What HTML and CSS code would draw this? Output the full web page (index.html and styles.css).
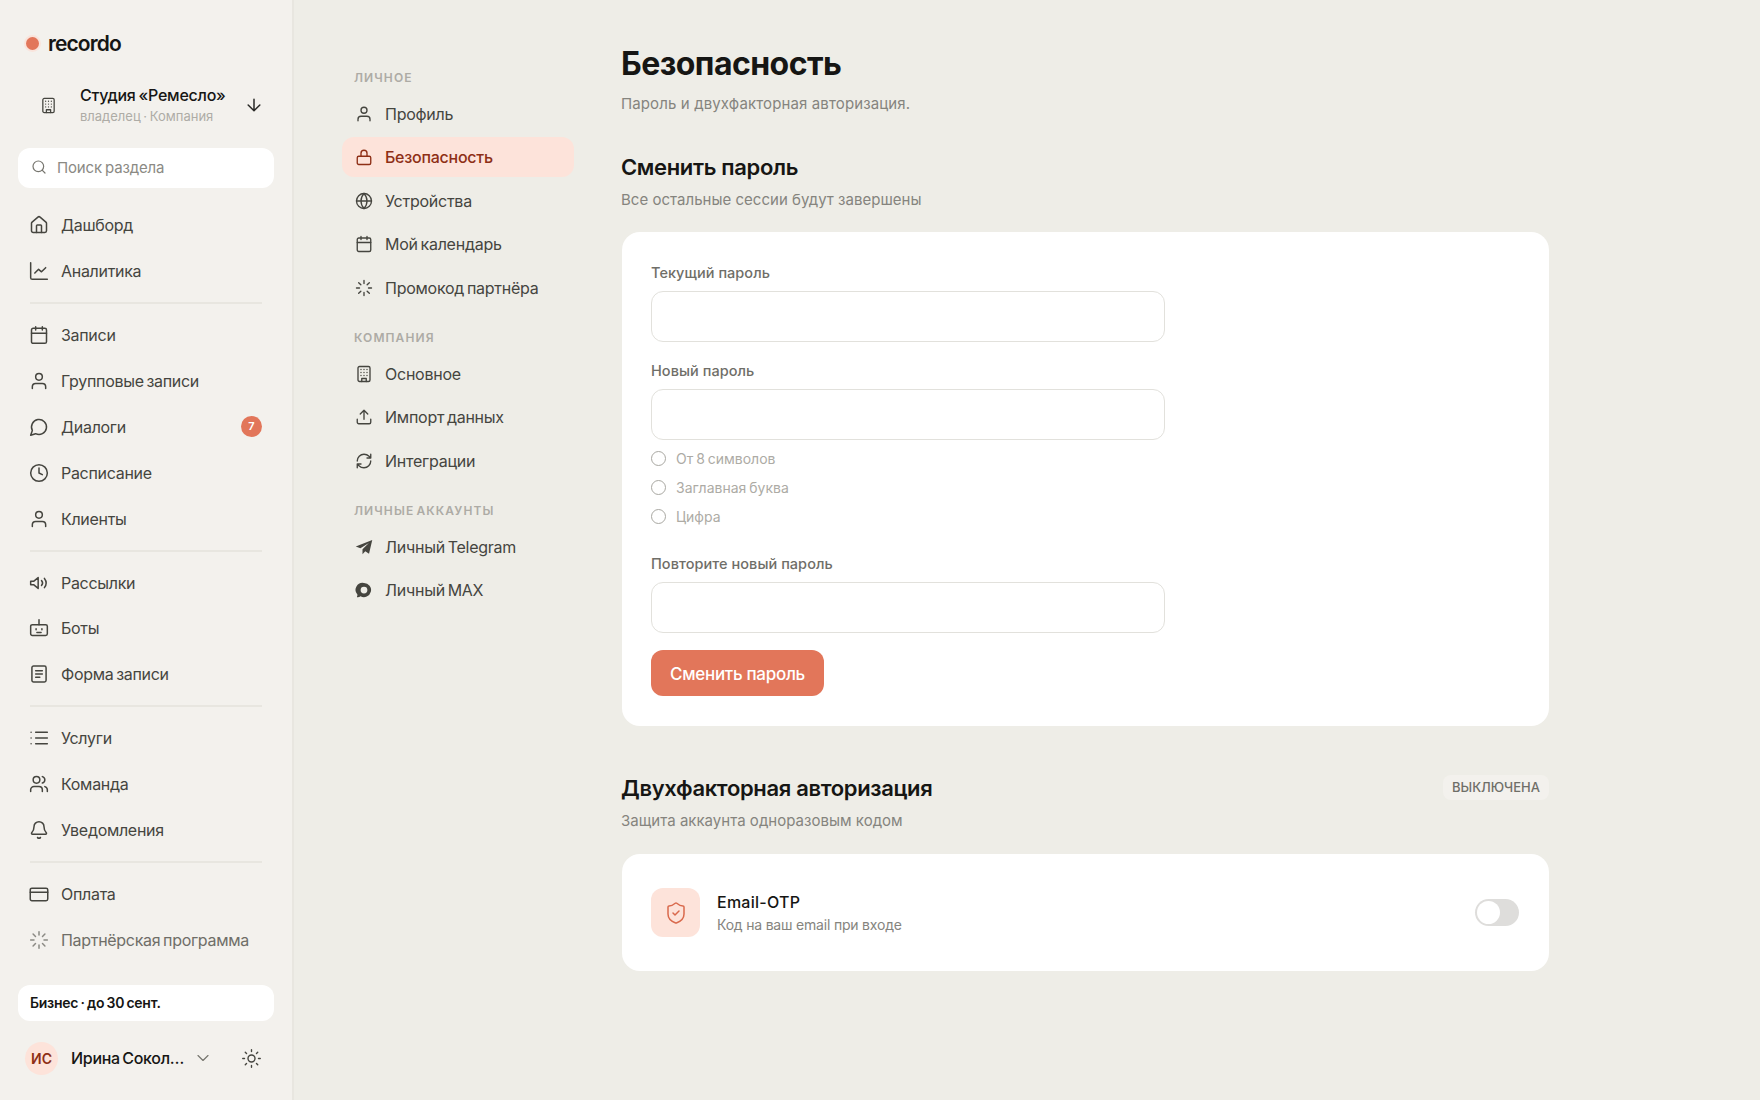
FILE: index.html
```html
<!DOCTYPE html>
<html lang="ru">
<head>
    <meta charset="UTF-8">
    <title>Безопасность — recordo</title>
    <link rel="stylesheet" href="styles.css">
</head>
<body>
    <svg class="sprite" xmlns="http://www.w3.org/2000/svg">
        <symbol id="i-building" viewBox="0 0 24 24"><rect x="4" y="2" width="16" height="20" rx="2"/><path d="M9 22v-4h6v4M8 6h.01M12 6h.01M16 6h.01M8 10h.01M12 10h.01M16 10h.01M8 14h.01M12 14h.01M16 14h.01"/></symbol>
        <symbol id="i-house" viewBox="0 0 24 24"><path d="M15 21v-8a1 1 0 0 0-1-1h-4a1 1 0 0 0-1 1v8"/><path d="M3 10a2 2 0 0 1 .709-1.528l7-5.999a2 2 0 0 1 2.582 0l7 5.999A2 2 0 0 1 21 10v9a2 2 0 0 1-2 2H5a2 2 0 0 1-2-2z"/></symbol>
        <symbol id="i-chart" viewBox="0 0 24 24"><path d="M2 2v18a2 2 0 0 0 2 2h18"/><path d="m20 8-5 5-3.500-3L7 14.500"/></symbol>
        <symbol id="i-calendar" viewBox="0 0 24 24"><path d="M8 2v4M16 2v4"/><rect x="3" y="4" width="18" height="18" rx="2"/><path d="M3 10h18"/></symbol>
        <symbol id="i-user" viewBox="0 0 24 24"><path d="M20 21v-2a4 4 0 0 0-4-4H8a4 4 0 0 0-4 4v2"/><circle cx="12" cy="7" r="4"/></symbol>
        <symbol id="i-message" viewBox="0 0 24 24"><path d="M7.900 20A9 9 0 1 0 4 16.100L2 22Z"/></symbol>
        <symbol id="i-clock" viewBox="0 0 24 24"><circle cx="12" cy="12" r="10"/><path d="M12 6v6l4 2"/></symbol>
        <symbol id="i-speaker" viewBox="0 0 24 24"><path d="M11 5.500 5.500 10H2v4h3.500l5.500 4.500z"/><path d="M15 9a4.500 4.500 0 0 1 0 6M18.500 6.500a9 9 0 0 1 0 11"/></symbol>
        <symbol id="i-bot" viewBox="0 0 24 24"><path d="M12 8V2"/><rect x="2" y="8" width="20" height="13" rx="2"/><path d="M8.500 13v1M15.500 13v1M9.500 17.500h5"/></symbol>
        <symbol id="i-form" viewBox="0 0 24 24"><rect x="3.500" y="2.500" width="17" height="19" rx="2"/><path d="M8 8h8M8 12h8M8 16h5"/></symbol>
        <symbol id="i-list" viewBox="0 0 24 24"><path d="M2.500 5h.01M2.500 12h.01M2.500 19h.01M8 5h14M8 12h14M8 19h14"/></symbol>
        <symbol id="i-users" viewBox="0 0 24 24"><path d="M16 21v-2a4 4 0 0 0-4-4H6a4 4 0 0 0-4 4v2"/><circle cx="9" cy="7" r="4"/><path d="M22 21v-2a4 4 0 0 0-3-3.870M16 3.130a4 4 0 0 1 0 7.750"/></symbol>
        <symbol id="i-bell" viewBox="0 0 24 24"><path d="M10.268 21a2 2 0 0 0 3.464 0"/><path d="M3.262 15.326A1 1 0 0 0 4 17h16a1 1 0 0 0 .740-1.673C19.410 13.956 18 12.499 18 8A6 6 0 0 0 6 8c0 4.499-1.411 5.956-2.738 7.326"/></symbol>
        <symbol id="i-card" viewBox="0 0 24 24"><rect x="1.500" y="5" width="21" height="15" rx="2"/><path d="M1.500 10h21"/></symbol>
        <symbol id="i-loader" viewBox="0 0 24 24"><path d="M12 2v4M16.200 7.800l2.900-2.900M18 12h4M16.200 16.200l2.900 2.900M12 18v4M4.900 19.100l2.900-2.900M2 12h4M4.900 4.900l2.900 2.900"/></symbol>
        <symbol id="i-lock" viewBox="0 0 24 24"><rect x="3" y="11" width="18" height="11" rx="2"/><path d="M8 11V7a4 4 0 0 1 8 0v4"/></symbol>
        <symbol id="i-globe" viewBox="0 0 24 24"><circle cx="12" cy="12" r="10"/><path d="M12 2a14.500 14.500 0 0 0 0 20 14.500 14.500 0 0 0 0-20M2 12h20"/></symbol>
        <symbol id="i-upload" viewBox="0 0 24 24"><path d="M21 15v4a2 2 0 0 1-2 2H5a2 2 0 0 1-2-2v-4M17 8l-5-5-5 5M12 3v12"/></symbol>
        <symbol id="i-refresh" viewBox="0 0 24 24"><path d="M3 12a9 9 0 0 1 9-9 9.750 9.750 0 0 1 6.740 2.740L21 8M21 3v5h-5M21 12a9 9 0 0 1-9 9 9.750 9.750 0 0 1-6.740-2.740L3 16M8 16H3v5"/></symbol>
    </svg>

    <aside class="sidebar">
        <div class="logo"><span class="logo-dot"></span>recordo</div>

        <div class="company">
            <svg class="icon company-icon"><use href="#i-building"/></svg>
            <div class="company-text">
                <div class="company-name">Студия «Ремесло»</div>
                <div class="company-role">владелец · Компания</div>
            </div>
            <svg class="icon company-arrow" viewBox="0 0 24 24"><path d="M12 5v14M19 12l-7 7-7-7"/></svg>
        </div>

        <div class="search">
            <svg class="icon search-icon" viewBox="0 0 24 24"><circle cx="11" cy="11" r="8"/><path d="m21 21-4.300-4.300"/></svg>
            <span>Поиск раздела</span>
        </div>

        <nav class="side-nav">
            <a class="side-item"><svg class="icon"><use href="#i-house"/></svg>Дашборд</a>
            <a class="side-item"><svg class="icon"><use href="#i-chart"/></svg>Аналитика</a>
            <div class="side-divider"></div>
            <a class="side-item"><svg class="icon"><use href="#i-calendar"/></svg>Записи</a>
            <a class="side-item"><svg class="icon"><use href="#i-user"/></svg>Групповые записи</a>
            <a class="side-item"><svg class="icon"><use href="#i-message"/></svg>Диалоги<span class="badge">7</span></a>
            <a class="side-item"><svg class="icon"><use href="#i-clock"/></svg>Расписание</a>
            <a class="side-item"><svg class="icon"><use href="#i-user"/></svg>Клиенты</a>
            <div class="side-divider"></div>
            <a class="side-item"><svg class="icon"><use href="#i-speaker"/></svg>Рассылки</a>
            <a class="side-item"><svg class="icon"><use href="#i-bot"/></svg>Боты</a>
            <a class="side-item"><svg class="icon"><use href="#i-form"/></svg>Форма записи</a>
            <div class="side-divider"></div>
            <a class="side-item"><svg class="icon"><use href="#i-list"/></svg>Услуги</a>
            <a class="side-item"><svg class="icon"><use href="#i-users"/></svg>Команда</a>
            <a class="side-item"><svg class="icon"><use href="#i-bell"/></svg>Уведомления</a>
            <div class="side-divider"></div>
            <a class="side-item"><svg class="icon"><use href="#i-card"/></svg>Оплата</a>
            <a class="side-item muted"><svg class="icon"><use href="#i-loader"/></svg>Партнёрская программа</a>
        </nav>

        <div class="plan">Бизнес · до 30 сент.</div>

        <div class="user">
            <span class="avatar">ИС</span>
            <span class="user-name">Ирина Соколова</span>
            <svg class="icon user-chevron" viewBox="0 0 24 24"><path d="m6 9 6 6 6-6"/></svg>
            <svg class="icon user-sun" viewBox="0 0 24 24"><circle cx="12" cy="12" r="4"/><path d="M12 2v2M12 20v2M4.900 4.900l1.400 1.400M17.700 17.700l1.400 1.400M2 12h2M20 12h2M6.300 17.700l-1.400 1.400M19.100 4.900l-1.400 1.400"/></svg>
        </div>
    </aside>

    <nav class="sub-nav">
        <div class="sub-label">ЛИЧНОЕ</div>
        <a class="sub-item"><svg class="icon"><use href="#i-user"/></svg>Профиль</a>
        <a class="sub-item active"><svg class="icon"><use href="#i-lock"/></svg>Безопасность</a>
        <a class="sub-item"><svg class="icon"><use href="#i-globe"/></svg>Устройства</a>
        <a class="sub-item"><svg class="icon"><use href="#i-calendar"/></svg>Мой календарь</a>
        <a class="sub-item"><svg class="icon"><use href="#i-loader"/></svg>Промокод партнёра</a>

        <div class="sub-label">КОМПАНИЯ</div>
        <a class="sub-item"><svg class="icon"><use href="#i-building"/></svg>Основное</a>
        <a class="sub-item"><svg class="icon"><use href="#i-upload"/></svg>Импорт данных</a>
        <a class="sub-item"><svg class="icon"><use href="#i-refresh"/></svg>Интеграции</a>

        <div class="sub-label">ЛИЧНЫЕ АККАУНТЫ</div>
        <a class="sub-item">
            <svg class="icon filled" viewBox="0 0 24 24"><path d="M23 2.500 1 11.200l6.200 2.500L18.500 6.500 10 15v6.500l3.700-3.900 5 3.400z"/></svg>
            Личный Telegram
        </a>
        <a class="sub-item">
            <svg class="icon filled" viewBox="0 0 24 24"><path fill-rule="evenodd" d="M12 2.500a9.500 9.500 0 1 1-4.700 17.800C6 21.300 4 22 2.800 21.500c-.6-.3.500-1.500.5-3.200A9.500 9.500 0 0 1 12 2.500zm0 5a4.500 4.500 0 1 0 0 9 4.500 4.500 0 0 0 0-9z"/></svg>
            Личный MAX
        </a>
    </nav>

    <main class="content">
        <h1>Безопасность</h1>
        <p class="page-sub">Пароль и двухфакторная авторизация.</p>

        <section class="block">
            <h2>Сменить пароль</h2>
            <p class="block-sub">Все остальные сессии будут завершены</p>
            <div class="card password-card">
                <label class="field-label">Текущий пароль</label>
                <input class="field" type="password">

                <label class="field-label">Новый пароль</label>
                <input class="field field-rules" type="password">
                <ul class="rules">
                    <li><span class="rule-dot"></span>От 8 символов</li>
                    <li><span class="rule-dot"></span>Заглавная буква</li>
                    <li><span class="rule-dot"></span>Цифра</li>
                </ul>

                <label class="field-label">Повторите новый пароль</label>
                <input class="field field-last" type="password">

                <button class="btn">Сменить пароль</button>
            </div>
        </section>

        <section class="block two-factor">
            <div class="block-head">
                <div>
                    <h2>Двухфакторная авторизация</h2>
                    <p class="block-sub">Защита аккаунта одноразовым кодом</p>
                </div>
                <span class="status">ВЫКЛЮЧЕНА</span>
            </div>
            <div class="card otp-card">
                <span class="otp-icon">
                    <svg class="icon" viewBox="0 0 24 24"><path d="M20 13c0 5-3.500 7.500-7.660 8.950a1 1 0 0 1-.670-.010C7.500 20.500 4 18 4 13V6a1 1 0 0 1 1-1c2 0 4.500-1.200 6.240-2.720a1.170 1.170 0 0 1 1.520 0C14.510 3.810 17 5 19 5a1 1 0 0 1 1 1z"/><path d="m9 12 2 2 4-4"/></svg>
                </span>
                <div class="otp-text">
                    <div class="otp-title">Email-OTP</div>
                    <div class="otp-sub">Код на ваш email при входе</div>
                </div>
                <span class="toggle"><span class="toggle-knob"></span></span>
            </div>
        </section>
    </main>
</body>
</html>
```

FILE: styles.css
```css
* {
    margin: 0;
    padding: 0;
    box-sizing: border-box;
}
body {
    display: flex;
    height: 100vh;
    overflow: hidden;
    background: #eeede7;
    color: #161614;
    font-family: 'Inter', 'Noto Sans', sans-serif;
}
.sprite {
    display: none;
}
.icon {
    width: 20px;
    height: 20px;
    flex-shrink: 0;
    fill: none;
    stroke: currentColor;
    stroke-width: 1.8;
    stroke-linecap: round;
    stroke-linejoin: round;
}
.icon.filled {
    fill: currentColor;
    stroke: none;
}

/* left sidebar */
.sidebar {
    width: 294px;
    flex-shrink: 0;
    display: flex;
    flex-direction: column;
    padding: 28px 18px 0;
    background: #f3f1ed;
    border-right: 2px solid #e8e6e0;
}
.logo {
    display: flex;
    align-items: center;
    gap: 9px;
    height: 30px;
    padding-left: 8px;
    font-size: 21px;
    font-weight: 600;
    letter-spacing: -0.9px;
}
.logo-dot {
    width: 13px;
    height: 13px;
    border-radius: 50%;
    background: #e2765a;
    box-shadow: 0 0 0 2px #f9e4dc;
}
.company {
    display: flex;
    align-items: center;
    height: 46px;
    margin-top: 24px;
    padding-left: 22px;
}
.company-icon {
    width: 17px;
    height: 17px;
    color: #45453f;
}
.company-text {
    margin-left: 23px;
    flex: 1;
}
.company-name {
    font-size: 16px;
    font-weight: 500;
    line-height: 22px;
    letter-spacing: -0.25px;
    word-spacing: -1px;
}
.company-role {
    font-size: 13px;
    line-height: 20px;
    color: #aeaca6;
    letter-spacing: 0;
    word-spacing: -1px;
}
.company-arrow {
    margin-right: 10px;
    color: #2a2a27;
}
.search {
    display: flex;
    align-items: center;
    gap: 10px;
    height: 40px;
    margin-top: 20px;
    padding: 0 0 2px 13px;
    background: #fff;
    border-radius: 12px;
    font-size: 15px;
    color: #8b8a84;
    letter-spacing: -0.15px;
    word-spacing: -1px;
}
.search-icon {
    width: 16px;
    height: 16px;
    color: #77766f;
}
.side-nav {
    margin-top: 14px;
}
.side-item {
    display: flex;
    align-items: center;
    gap: 12px;
    height: 45.95px;
    padding: 0 12px 0 11px;
    font-size: 16px;
    color: #45453f;
    letter-spacing: -0.3px;
    word-spacing: -1.5px;
}
.side-item.muted {
    color: #6f6e68;
}
.side-item.muted .icon {
    color: #8b8a84;
}
.side-divider {
    height: 2px;
    margin: 8px 12px;
    background: #e8e6e0;
}
.badge {
    margin-left: auto;
    width: 21px;
    height: 21px;
    border-radius: 50%;
    background: #e2765a;
    color: #fff;
    font-size: 11px;
    font-weight: 600;
    line-height: 21px;
    text-align: center;
    letter-spacing: 0;
}
.plan {
    height: 36px;
    margin-top: 22px;
    padding-left: 12px;
    background: #fff;
    border-radius: 12px;
    font-size: 14px;
    font-weight: 600;
    line-height: 36px;
    letter-spacing: -0.25px;
    word-spacing: -1px;
}
.user {
    display: flex;
    align-items: center;
    height: 34px;
    margin-top: 20px;
    padding-left: 7px;
}
.avatar {
    width: 33px;
    height: 33px;
    flex-shrink: 0;
    border-radius: 50%;
    background: #fde3da;
    color: #8e2f16;
    font-size: 14px;
    font-weight: 600;
    line-height: 33px;
    text-align: center;
}
.user-name {
    width: 118px;
    margin-left: 13px;
    font-size: 16px;
    font-weight: 500;
    letter-spacing: -0.3px;
    word-spacing: -1.5px;
    white-space: nowrap;
    overflow: hidden;
    text-overflow: ellipsis;
}
.user-chevron {
    margin-left: 4px;
    stroke-width: 1.4;
    color: #77766f;
}
.user-sun {
    width: 21px;
    height: 21px;
    margin-left: 28px;
    stroke-width: 1.6;
    color: #45453f;
}

/* second column */
.sub-nav {
    width: 232px;
    flex-shrink: 0;
    margin-left: 48px;
    padding-top: 69.4px;
    display: flex;
    flex-direction: column;
    gap: 3.5px;
}
.sub-label {
    height: 18px;
    margin: 18px 0 3px 12px;
    font-size: 12px;
    font-weight: 600;
    line-height: 18px;
    letter-spacing: 1.1px;
    word-spacing: -2px;
    color: #adaba5;
}
.sub-label:first-child {
    margin-top: 0;
}
.sub-item {
    display: flex;
    align-items: center;
    gap: 12px;
    height: 40px;
    padding: 0 13px;
    border-radius: 12px;
    font-size: 16px;
    color: #45453f;
    letter-spacing: -0.25px;
    word-spacing: -1.5px;
}
.sub-item .icon {
    width: 18px;
    height: 18px;
}
.sub-item.active {
    background: #fde3da;
    color: #8e2f16;
    font-weight: 500;
}

/* main column */
.content {
    width: 927px;
    margin-left: 48px;
    padding-top: 45px;
}
h1 {
    margin-left: -1px;
    font-size: 32px;
    font-weight: 700;
    line-height: 38px;
    letter-spacing: -0.55px;
}
.page-sub {
    margin: 11px 0 0 -1px;
    font-size: 15px;
    line-height: 20px;
    color: #85847e;
    letter-spacing: 0.12px;
}
.block {
    margin-top: 39px;
}
h2 {
    margin-left: -1px;
    font-size: 22px;
    font-weight: 600;
    line-height: 28px;
    letter-spacing: -0.35px;
}
.block-sub {
    margin: 9px 0 0 -1px;
    font-size: 15px;
    line-height: 20px;
    color: #85847e;
    letter-spacing: 0.02px;
}
.card {
    background: #fff;
    border-radius: 18px;
}
.password-card {
    margin-top: 22px;
    padding: 31px 29px 30px;
    height: 494px;
}
.field-label {
    display: block;
    font-size: 14.5px;
    font-weight: 500;
    line-height: 19px;
    letter-spacing: 0.05px;
    color: #6f6e68;
}
.field {
    display: block;
    width: 514px;
    height: 51px;
    margin: 9px 0 19px;
    border: 1.5px solid #e2e1dc;
    border-radius: 12px;
    background: #fff;
}
.field-rules {
    margin-bottom: 4px;
}
.field-last {
    margin-bottom: 17px;
}
.rules {
    list-style: none;
    margin-bottom: 23px;
}
.rules li {
    display: flex;
    align-items: center;
    gap: 10px;
    height: 29px;
    font-size: 14px;
    color: #adaba5;
    word-spacing: -1px;
}
.rule-dot {
    width: 15px;
    height: 15px;
    border: 1.5px solid #a9a8a2;
    border-radius: 50%;
}
.btn {
    display: block;
    width: 173px;
    height: 46px;
    padding-top: 2px;
    border: none;
    border-radius: 12px;
    background: #e2765a;
    color: #fff;
    font-family: inherit;
    font-size: 17px;
    font-weight: 500;
    letter-spacing: -0.3px;
}
.two-factor {
    margin-top: 48px;
}
.block-head {
    display: flex;
    justify-content: space-between;
    align-items: flex-start;
}
.status {
    margin-top: 1px;
    height: 25px;
    padding: 0 9px;
    border-radius: 8px;
    background: #f3f1ed;
    font-size: 13px;
    font-weight: 500;
    line-height: 25px;
    color: #6f6e68;
}
.otp-card {
    display: flex;
    align-items: center;
    height: 117px;
    margin-top: 23px;
    padding: 0 30px 0 29px;
}
.otp-icon {
    width: 49px;
    height: 49px;
    display: flex;
    align-items: center;
    justify-content: center;
    border-radius: 12px;
    background: #fde3da;
    color: #d9694c;
}
.otp-icon .icon {
    width: 24px;
    height: 24px;
    stroke-width: 1.5;
}
.otp-text {
    margin-left: 17px;
    flex: 1;
}
.otp-title {
    font-size: 16px;
    font-weight: 500;
    line-height: 24px;
    letter-spacing: 0.25px;
}
.otp-sub {
    margin-top: 1px;
    font-size: 14px;
    line-height: 20px;
    color: #85847e;
    letter-spacing: -0.2px;
}
.toggle {
    width: 44px;
    height: 27px;
    padding: 2px;
    border-radius: 14px;
    background: #dedddb;
}
.toggle-knob {
    display: block;
    width: 23px;
    height: 23px;
    border-radius: 50%;
    background: #fff;
}
```
